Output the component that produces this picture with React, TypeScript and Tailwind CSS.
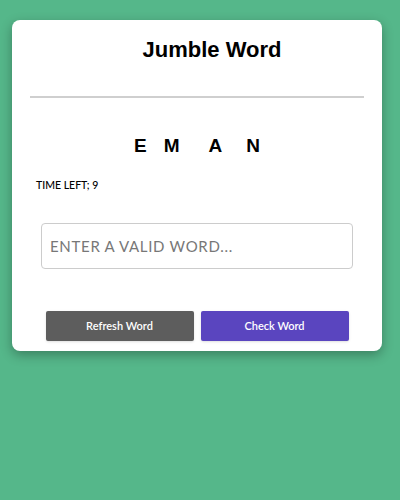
import React from "react";

export default function App() {
  return (
    <div className="w-[400px] h-[500px] bg-[#55b78a] pt-[20px] px-[12px]" style={{ fontFamily: "Lato, 'Open Sans', sans-serif" }}>
      <div className="w-[370px] bg-white rounded-lg shadow-[0_4px_12px_rgba(0,0,0,0.3)] pt-[14px] pb-[10px]">
        <h1 className="text-center text-[22px] font-bold text-black pl-[30px] leading-[32px] font-['Liberation_Sans',Arial,sans-serif]">
          Jumble Word
        </h1>
        <div className="mx-[18px] mt-[30px] h-[2px] bg-[#cfcfcf]" />
        <div className="mt-[36px] flex justify-center text-[19px] font-bold text-black leading-[24px] font-['Liberation_Sans',Arial,sans-serif]">
          <span>E</span>
          <span className="ml-[17px]">M</span>
          <span className="ml-[29px]">A</span>
          <span className="ml-[24px]">N</span>
        </div>
        <div className="mt-[20px] pl-[24px] text-[10.5px] text-black font-medium">TIME LEFT; 9</div>
        <div className="mt-[29px] px-[29px]">
          <input
            className="w-full h-[46px] border border-[#cccccc] rounded-[4px] px-[8px] text-[15px] tracking-[0.7px] outline-none placeholder:text-[#777777]"
            placeholder="ENTER A VALID WORD..."
          />
        </div>
        <div className="mt-[42px] flex justify-center gap-[7px]">
          <button className="w-[148px] h-[30px] bg-[#5d5d5d] text-white text-[11px] font-semibold rounded-[2px] shadow-sm">Refresh Word</button>
          <button className="w-[148px] h-[30px] bg-[#5a45bf] text-white text-[11px] font-semibold rounded-[2px] shadow-sm">Check Word</button>
        </div>
      </div>
    </div>
  );
}
